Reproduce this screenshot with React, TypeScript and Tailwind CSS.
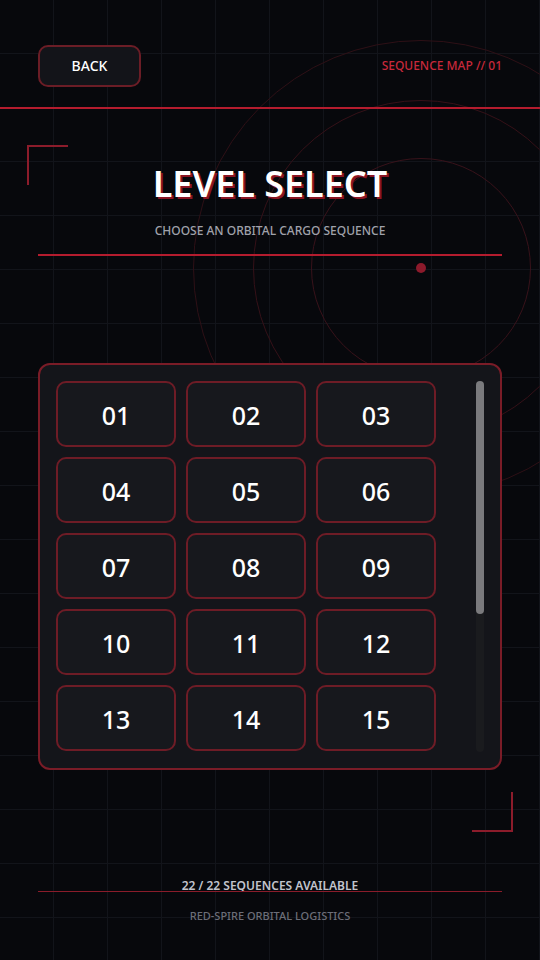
const levels = Array.from({ length: 22 }, (_, i) => String(i + 1).padStart(2, "0"));

function Backdrop() {
  return (
    <div className="pointer-events-none absolute inset-0 overflow-hidden">
      {/* orbital rings */}
      <div className="absolute left-[193px] top-[40px] h-[456px] w-[456px] rounded-full border border-[#2e1016]" />
      <div className="absolute left-[253px] top-[100px] h-[336px] w-[336px] rounded-full border border-[#351118]" />
      <div className="absolute left-[311px] top-[158px] h-[220px] w-[220px] rounded-full border border-[#38121a]" />
      <div className="absolute left-[416px] top-[263px] h-[10px] w-[10px] rounded-full bg-[#8c1a2b]" />
      {/* corner brackets */}
      <div className="absolute left-[27px] top-[145px] h-[40px] w-[41px] border-l-2 border-t-2 border-[#8c1c2b]" />
      <div className="absolute bottom-[128px] right-[27px] h-[40px] w-[41px] border-b-2 border-r-2 border-[#8c1c2b]" />
    </div>
  );
}

function LevelGrid() {
  return (
    <div className="flex h-[371px]">
      <div className="flex-1 overflow-hidden">
        <div className="grid grid-cols-[repeat(3,120px)] gap-[10px]">
          {levels.map((lv) => (
            <button
              key={lv}
              className="flex h-[66px] items-center justify-center rounded-[10px] border-2 border-[#6e1c26] bg-[#17181d] pt-[3px] text-[25px] font-medium text-white"
            >
              {lv}
            </button>
          ))}
        </div>
      </div>
      <div className="w-2 rounded-full bg-[#1a1b1e]">
        <div className="h-[233px] w-2 rounded-full bg-[#7a7a7d]" />
      </div>
    </div>
  );
}

export default function App() {
  return (
    <div className="relative h-[960px] w-full overflow-hidden bg-[#07080c] bg-[linear-gradient(to_right,#12141a_1px,transparent_1px),linear-gradient(to_bottom,#12141a_1px,transparent_1px)] bg-[size:54px_54px] bg-[position:53px_53px] font-['Noto_Sans',sans-serif]">
      <Backdrop />
      <div className="relative z-10 flex flex-col">
        <header className="flex items-center justify-between border-b-2 border-[#b41c2e] px-[38px] pb-[20px] pt-[45px]">
          <button className="flex h-[42px] w-[103px] items-center justify-center rounded-[10px] border-2 border-[#6b1d26] bg-[#131419] text-sm font-medium text-white">
            BACK
          </button>
          <span className="text-[12px] font-medium text-[#c8283b]">SEQUENCE MAP // 01</span>
        </header>

        <section className="mt-[53px] flex flex-col items-center">
          <h1 className="text-[36px] font-semibold leading-[1.2] text-white [text-shadow:2px_2px_0_#8b1523]">
            LEVEL SELECT
          </h1>
          <p className="mt-[18px] text-[12px] font-medium leading-4 text-[#a0a2ab]">
            CHOOSE AN ORBITAL CARGO SEQUENCE
          </p>
        </section>
        <div className="mx-[38px] mt-[15px] h-[2px] bg-[#b41c2e]" />

        <div className="mx-[38px] mt-[107px] rounded-xl border-2 border-[#7a1c27] bg-[#14151a] p-4">
          <LevelGrid />
        </div>

        <footer className="mt-[108px] flex flex-col items-center">
          <p className="text-[12px] font-semibold leading-4 text-[#c2c4cc]">22 / 22 SEQUENCES AVAILABLE</p>
          <div className="-mt-[3px] h-px w-[464px] bg-[#8a1c2a]" />
          <p className="mt-[16px] text-[11px] font-medium leading-4 text-[#6c6e78]">RED-SPIRE ORBITAL LOGISTICS</p>
        </footer>
      </div>
    </div>
  );
}
